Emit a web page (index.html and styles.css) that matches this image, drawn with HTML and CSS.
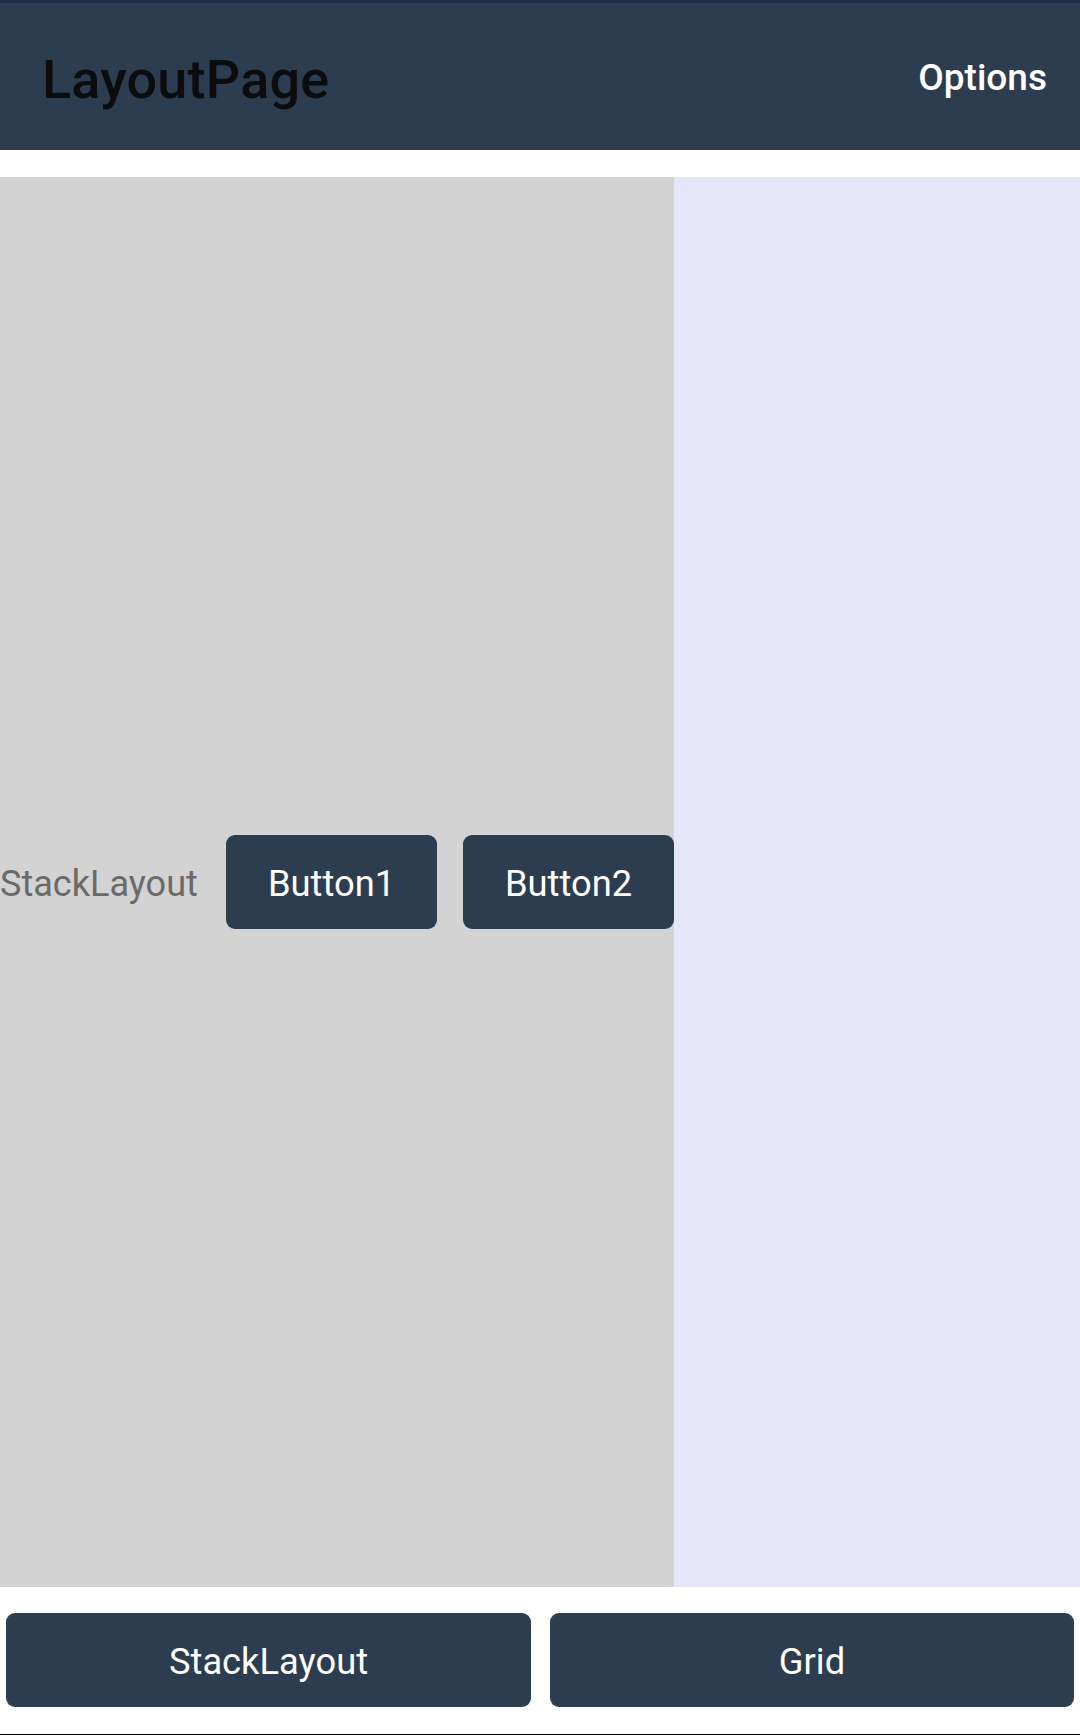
FILE: index.html
```html
<!DOCTYPE html>
<html>
<head>
<meta charset="utf-8">
<link rel="stylesheet" href="styles.css">
</head>
<body>
<div class="page">
  <header class="toolbar">
    <div class="title">LayoutPage</div>
    <div class="options">Options</div>
  </header>
  <div class="spacer"></div>
  <main class="content">
    <section class="stack">
      <div class="label">StackLayout</div>
      <button class="btn small">Button1</button>
      <button class="btn small">Button2</button>
    </section>
    <section class="side"></section>
  </main>
  <footer class="bottom">
    <button class="btn wide">StackLayout</button>
    <button class="btn wide">Grid</button>
  </footer>
  <div class="navline"></div>
</div>
</body>
</html>
```
FILE: styles.css
```css
html, body {
  margin: 0;
  padding: 0;
  background: #ffffff;
}
body {
  font-family: Roboto, "Liberation Sans", sans-serif;
}
.page {
  width: 1080px;
  height: 1735px;
  display: flex;
  flex-direction: column;
  overflow: hidden;
}
.toolbar {
  height: 147px;
  border-top: 3px solid #1e3047;
  background: #2d3d50;
  display: flex;
  align-items: center;
  justify-content: space-between;
  padding: 0 33px 0 42px;
  flex: none;
}
.title {
  font-size: 54px;
  font-weight: 500;
  color: #0b0c0e;
  letter-spacing: 0.2px;
  margin-top: 6px;
}
.options {
  font-size: 37px;
  font-weight: 500;
  color: #ffffff;
  margin-top: 2px;
}
.spacer {
  height: 27px;
  flex: none;
}
.content {
  height: 1410px;
  display: grid;
  grid-template-columns: 674px 406px;
  flex: none;
}
.stack {
  background: #d3d3d3;
  display: flex;
  align-items: center;
  gap: 26px;
}
.label {
  width: 200px;
  font-size: 36.1px;
  color: #6a6a6a;
  white-space: nowrap;
  padding-top: 3px;
}
.side {
  background: #e6e6fa;
}
.btn {
  border: none;
  background: #2d3d50;
  color: #ffffff;
  font-family: Roboto, "Liberation Sans", sans-serif;
  font-size: 36.3px;
  height: 94px;
  border-radius: 9px;
  padding: 3px 0 0 0;
  margin: 0;
}
.small {
  width: 211px;
}
.bottom {
  height: 147px;
  display: grid;
  grid-template-columns: 525px 524px;
  column-gap: 19px;
  padding: 26px 6px 0 6px;
  box-sizing: border-box;
  align-content: start;
  flex: none;
}
.navline {
  height: 1px;
  background: #000000;
  flex: none;
}
```
